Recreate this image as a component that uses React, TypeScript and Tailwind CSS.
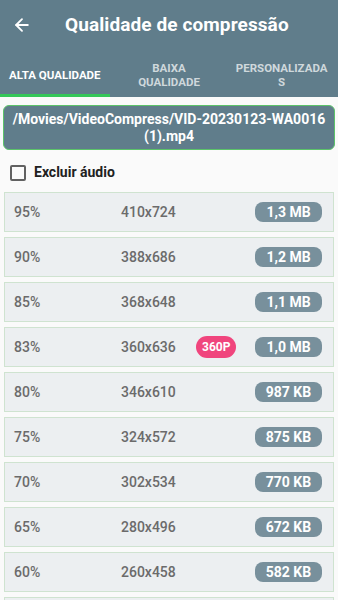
import { ArrowLeft } from "lucide-react";

const rows = [
  { pct: "95%", res: "410x724", size: "1,3 MB" },
  { pct: "90%", res: "388x686", size: "1,2 MB" },
  { pct: "85%", res: "368x648", size: "1,1 MB" },
  { pct: "83%", res: "360x636", size: "1,0 MB", tag: "360P" },
  { pct: "80%", res: "346x610", size: "987 KB" },
  { pct: "75%", res: "324x572", size: "875 KB" },
  { pct: "70%", res: "302x534", size: "770 KB" },
  { pct: "65%", res: "280x496", size: "672 KB" },
  { pct: "60%", res: "260x458", size: "582 KB" },
];

export default function App() {
  return (
    <div className="w-[338px] h-[600px] overflow-hidden bg-[#fafafa] font-['Roboto',sans-serif]">
      {/* Toolbar + tabs */}
      <div className="bg-[#607d8b]">
        <div className="h-[50px] flex items-center">
          <ArrowLeft className="ml-[12px] w-[20px] h-[20px] text-white" strokeWidth={2.2} />
          <h1 className="ml-[33px] text-[19px] font-bold text-white tracking-[0.1px]">Qualidade de compressão</h1>
        </div>
        <div className="grid grid-cols-3 h-[47px]">
          <div className="flex flex-col">
            <div className="flex-1 flex items-center justify-center pt-[5px] pr-[3px] text-[11.5px] font-bold text-white leading-[14px]">
              ALTA QUALIDADE
            </div>
            <div className="h-[3px] bg-[#34c759] w-[110px]" />
          </div>
          <div className="flex items-center justify-center text-center pt-[3px] text-[11.5px] font-bold text-[#cfd8dc] leading-[14px]">
            BAIXA
            <br />
            QUALIDADE
          </div>
          <div className="flex items-center justify-center text-center pt-[3px] text-[11.5px] font-bold text-[#cfd8dc] leading-[14px]">
            PERSONALIZADA
            <br />S
          </div>
        </div>
      </div>

      {/* Path */}
      <div className="mx-[3px] mt-[8px] h-[45px] rounded-[6px] border-[1.5px] border-[#5cc36a] bg-[#607d8b] flex items-center justify-center text-center text-white font-bold text-[14px] leading-[17px] px-2">
        /Movies/VideoCompress/VID-20230123-WA0016 (1).mp4
      </div>

      {/* Checkbox */}
      <div className="flex items-center h-[42px] pl-[10px] pt-[3px]">
        <div className="w-[16px] h-[16px] border-2 border-[#616161] rounded-[2px]" />
        <span className="ml-[8px] text-[14px] font-bold text-[#212121]">Excluir áudio</span>
      </div>

      {/* List */}
      <div className="flex flex-col gap-[5px] px-[4px]">
        {rows.map((r) => (
          <div
            key={r.pct}
            className="h-[40px] shrink-0 flex items-center bg-[#eceff1] border border-[#cfe3d0] text-[14px] text-[#6b6b6b]"
          >
            <span className="w-[116px] pl-[9px] font-medium">{r.pct}</span>
            <span className="w-[75px] font-medium">{r.res}</span>
            <div className="w-[59px] flex">
              {r.tag && (
                <span className="h-[22px] px-[6px] rounded-full bg-[#f0457d] text-white text-[12px] font-bold flex items-center">
                  {r.tag}
                </span>
              )}
            </div>
            <span className="w-[67px] h-[20px] rounded-[8px] bg-[#78909c] text-white font-bold text-[14px] flex items-center justify-center">
              {r.size}
            </span>
          </div>
        ))}
        <div className="h-[40px] shrink-0 bg-[#eceff1] border border-[#cfe3d0]" />
      </div>
    </div>
  );
}
